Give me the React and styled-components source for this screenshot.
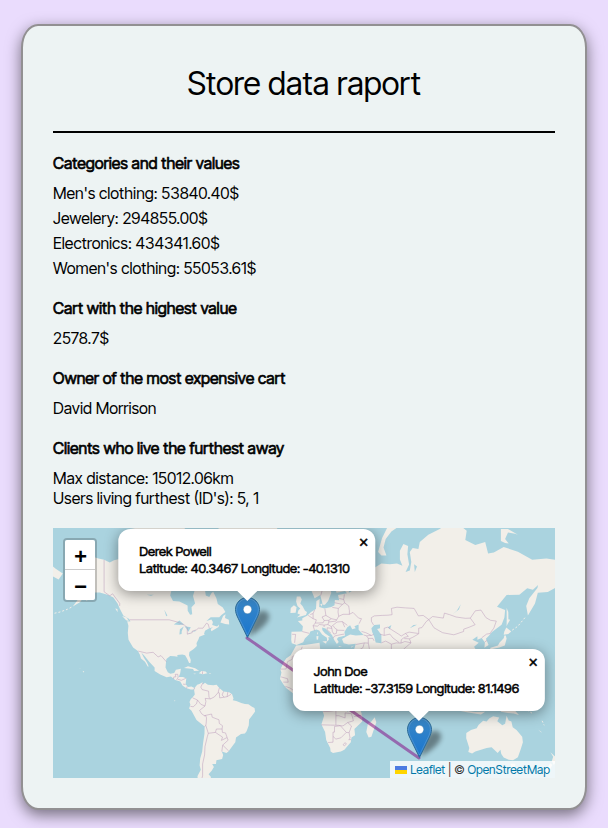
import React from "react";
import styled, { createGlobalStyle } from "styled-components";

const GlobalStyle = createGlobalStyle`
  *, *::before, *::after { box-sizing: border-box; }
  body {
    margin: 0;
    background: #eadcfd;
    color: #000;
    font-family: "Inter Tight", Inter, "Liberation Sans", sans-serif;
    font-size: 16px;
    font-weight: 400;
    line-height: 20px;
  }
  h1, h2, p, ul { margin: 0; padding: 0; }
`;

const Page = styled.main`
  padding: 24px 21px 18px;
`;

const Card = styled.article`
  padding: 30px;
  border: 2px solid #929092;
  border-radius: 3%;
  background: #edf3f3;
  box-shadow: 0 5px 15px rgba(0, 0, 0, 0.5);
`;

const Title = styled.h1`
  padding: 8px 0 27px;
  border-bottom: 2px solid #000;
  font-size: 32px;
  font-weight: 400;
  line-height: 40px;
  text-align: center;
`;

const Section = styled.section`
  margin-top: 20px;
`;

const Heading = styled.h2`
  margin-bottom: 10px;
  font-size: 16px;
  font-weight: 400;
  line-height: 20px;
  -webkit-text-stroke: 0.04em currentColor;
`;

const ValueList = styled.ul`
  display: flex;
  flex-direction: column;
  gap: 5px;
  list-style: none;
`;

const MapFrame = styled.section`
  position: relative;
  height: 250px;
  margin-top: 20px;
  overflow: hidden;
  background: #aad3df;
  font-size: 12px;
`;

const WorldSvg = styled.svg`
  display: block;
  width: 100%;
  height: 250px;
`;

const ZoomControl = styled.div`
  position: absolute;
  top: 10px;
  left: 10px;
  display: flex;
  flex-direction: column;
  border: 2px solid rgba(0, 0, 0, 0.2);
  border-radius: 4px;
  background-clip: padding-box;
`;

const ZoomButton = styled.button`
  width: 30px;
  height: 30px;
  padding: 8px 0 0;
  border: 0;
  border-bottom: ${(p) => (p.$divided ? "1px solid #ccc" : "0")};
  border-radius: ${(p) => (p.$divided ? "2px 2px 0 0" : "0 0 2px 2px")};
  background: #fff;
  color: #000;
  font: bold 22px/22px "Liberation Mono", monospace;
  text-indent: 1px;
`;

const Pin = styled.div`
  position: absolute;
  left: calc(50% + ${(p) => p.$x}px);
  top: ${(p) => p.$y}px;
  width: 0;
  height: 0;
`;

const MarkerSvg = styled.svg`
  position: absolute;
  left: -12px;
  bottom: 0;
  overflow: visible;
`;

const Popup = styled.div`
  position: absolute;
  bottom: 47px;
  left: 0;
  transform: translateX(-50%);
  padding: 14px 26px 14px 21px;
  border-radius: 12px;
  background: #fff;
  box-shadow: 0 3px 14px rgba(0, 0, 0, 0.4);
  font-size: 13px;
  line-height: 17px;
  white-space: nowrap;
  -webkit-text-stroke: 0.04em currentColor;
`;

const PopupTip = styled.svg`
  position: absolute;
  top: 100%;
  left: 50%;
  margin-left: -12px;
`;

const CloseButton = styled.button`
  position: absolute;
  top: 0;
  right: 0;
  width: 24px;
  height: 24px;
  padding: 0;
  border: 0;
  background: none;
  color: #000;
  font: 16px/24px "Inter Tight", Inter, sans-serif;
`;

const Attribution = styled.div`
  position: absolute;
  right: 0;
  bottom: 0;
  padding: 0 5px;
  background: rgba(255, 255, 255, 0.8);
  font-size: 12px;
  line-height: 17px;
  color: #333;
  white-space: nowrap;
`;

const MapLink = styled.a`
  color: #0078a8;
  text-decoration: none;
`;

const Flag = styled.svg`
  margin-right: 3px;
`;

/* Web Mercator at zoom 1: the world is 512 units wide. */
const CENTER_X = 251.6;
const EQUATOR_Y = 172;
const SCALE = 512 / (2 * Math.PI);
const project = (lng, lat) => [
  CENTER_X + (lng * 512) / 360,
  EQUATOR_Y - SCALE * Math.log(Math.tan(Math.PI / 4 + (lat * Math.PI) / 360)),
];
const toPath = (text, closed) => {
  const n = text.trim().split(/[\s,]+/).map(Number);
  let d = "";
  for (let i = 0; i < n.length; i += 2) {
    const [x, y] = project(n[i], n[i + 1]);
    d += `${i ? "L" : "M"}${x.toFixed(1)} ${y.toFixed(1)}`;
  }
  return closed ? d + "Z" : d;
};

const LAND = [
  // North and Central America
  `-168,65.7 -162,66.5 -166,68.3 -163,69.5 -157,71.3 -152,70.8 -145,70 -141,69.7 -137,69 -134,69.6 -129,70 -125,70 -120,69.6 -115,68.5 -108,68 -98,68 -94,72 -90,69 -85,69.6 -82,68 -87,65 -93,62 -94.5,59 -92.5,57 -88,56.7 -82.3,55.2 -82.2,53 -80.5,51.3 -79,51.5 -79.5,54.5 -77,56 -78.5,58.8 -77.5,60.5 -78,62.4 -73,62.2 -70,60.9 -69.5,59 -67,58.4 -65.5,59.8 -64.3,60.3 -62,58 -61,55.8 -57.5,54.4 -55.7,52.5 -58.5,51.2 -60,50.2 -66,50.2 -69,48.5 -65.5,49.2 -64.5,48 -65,46.5 -61.5,45.8 -60.2,46.8 -60.5,45.6 -65.5,43.5 -66,44.6 -64.5,45.5 -67,45 -70,43.7 -70.7,42 -70,41.7 -74,40.6 -74.5,39.3 -76,37 -75.7,35.4 -78,33.8 -81,32 -81.3,30 -80,27 -80.3,25.2 -81.2,25.2 -82.7,28 -84,30 -86,30.4 -89.5,30.2 -89.4,29.1 -91.5,29.4 -94.5,29.5 -97.2,27.7 -97.5,25 -97.8,22.3 -96.2,19.2 -94.4,18.2 -91.7,18.6 -90.5,20.8 -87,21.5 -87.5,18.5 -88.5,15.9 -85.5,15.9 -83.2,15 -83.7,11 -82,9 -79.6,9.5 -77.5,8.5 -78,7.3 -80,7.3 -83,8.2 -85.7,10 -87.5,12.8 -91,13.9 -94,16.2 -97,15.8 -101.5,17.7 -105.5,20 -105.5,22.3 -109.3,26 -112.5,29.5 -114.8,31.7 -113,28.5 -110.8,25.5 -109.6,23 -110.3,23 -112.2,26 -115,28 -115.8,30.3 -117.2,32.6 -120.6,34.6 -123.8,39 -124.3,42.5 -123.9,46.2 -124.7,48.3 -122.5,48.2 -123.3,49.4 -127.5,51 -130,54 -131.5,56 -134.5,58.3 -138,59.2 -144,60.1 -148,60.1 -152,59.2 -151,61.1 -154,59.2 -158,56.5 -163,54.8 -158,58.5 -162,58.8 -162,60 -165.5,61.6 -161,64 -166,64.5`,
  // Canadian Arctic and Greenland
  `-124,72 -117,70 -105,69.5 -103,73 -118,74 -123,76 -90,77.5 -80,75 -80,73.7 -66,68 -62,66.5 -65,63 -72,64 -76,68 -90,72`,
  `-73,78.2 -60,76 -55,72 -53,67 -48,61 -43.5,60 -40,65 -25,69.5 -20,75 -18,78`,
  // Newfoundland, Vancouver, Arctic fringes
  `-59.2,47.7 -57.3,50.8 -55.6,51.5 -56,49.9 -53.3,49 -53,46.8 -55.8,47`,
  `-128.3,50.7 -125,50 -123.6,48.4 -125.5,48.8`,
  `-133.2,54 -131.6,53.8 -131.4,52.4`,
  `-154.5,57.8 -152.3,58.3 -153,57`,
  // Caribbean
  `-84.8,22 -82,23.1 -77,21.8 -74.2,20.2 -77.7,19.9 -78.5,21.3`,
  `-74.4,18.5 -72.5,19.9 -69.6,19.7 -68.4,18.5 -71.5,17.8`,
  `-78.3,18.4 -76.3,18.2 -77.2,17.8`, `-67.2,18.4 -65.7,18.4 -66,18 -67.1,18`,
  `-156,20.2 -154.9,19.5 -155.7,19`, `-158.2,21.6 -157.4,21.3 -158,21.2`,
  `-91.5,0 -90.9,-.3 -91.4,-1`,
  // South America
  `-77.5,8.5 -75.5,10.7 -74,11.2 -71.7,12.4 -71.5,10.9 -70,12.1 -68,10.6 -64.3,10.3 -61.9,10.7 -60,8.5 -57,6 -53,5.4 -51,4 -50,1 -50.5,-.2 -48,-.8 -44.5,-2.2 -42,-2.8 -39.5,-3 -37,-4.8 -35.2,-5.7 -34.8,-8 -37,-11 -39,-13.5 -39.2,-17.5 -40.8,-21.5 -42,-23 -44.7,-23.2 -48.2,-25.5 -48.7,-28.5 -51,-31 -53.5,-34 -55,-34.9 -58.2,-34 -57.2,-36 -58,-38.2 -62,-39 -62.3,-41 -65,-41 -63.8,-42.5 -65.3,-44.5 -67.5,-46.2 -65.8,-47.5 -67,-50 -75,-50 -75.3,-47 -73,-44 -73.8,-41.8 -73.4,-38 -72,-34 -71.4,-29 -70.4,-23 -70.3,-18.4 -76,-14 -79.5,-7.5 -81.2,-6 -80.3,-3.3 -80.9,-1.5 -80,.7 -78.8,1.7 -77.2,3.8 -77.7,7`,
  // Eurasia, with the Arabian and Indian peninsulas
  `-9.2,43.2 -1.7,43.4 -1.2,46 -4.7,48.4 -1.6,48.7 -1.6,49.7 2,51 4.5,52.5 8,53.8 8.3,57 10.6,57.7 10.3,54.6 14,54 18.8,54.6 21,55.3 21.3,57.3 24.3,57.2 23.5,59.2 29.8,59.8 28.5,60.6 22.5,60 21.3,61.8 25.3,65 22,65.8 17.3,62 18.8,60 16.5,57 14.3,55.5 12.8,55.5 11,59.2 7,58 5,60.5 5.5,62.3 12,65.5 15,68.3 21,70.2 28,71 33,69.3 41,67.5 40,66.2 34,66.5 37,63.9 40,64.8 42.5,66.4 44,66.1 44,68.4 46,66.9 54,68.8 60,68.6 65,68.8 68.8,68.2 67,69.8 67,71.8 69.5,73.2 72.8,72.8 72.3,71 73.5,68.5 71,66.5 74,66.9 75,69.2 74,71.5 76,72.4 80,72.2 81,73.6 87,75 95,76 104,77.6 114,75.7 113,74 120,73 127,73.6 129,71.2 133,71.4 140,72.6 150,71.6 160,69.7 170,70 177,69.7 190,66 184,64.5 178,64.6 179.5,62.5 171,60.2 164,60 163,58 162,56 157,51 155.8,55 158,58 163.7,61.6 164.2,62.6 160.5,61 156.5,61.5 151,59.3 142,59.2 135.3,54.7 141,53.3 140.5,50 138.5,46.7 131.8,43 129.7,41.2 127.5,39.5 129.4,36 126.4,34.4 126.8,37.4 124.5,39.9 121.5,39 121.5,40.8 118,39 122.4,37.3 119.2,35 122,31 121,28 115,22.7 108,21.5 106,18.8 109,12 105,9 100.7,13.4 103,3 98,9 98,15 94,16 90,22 80,15 77,8 73,19 67,25 57,27 51,28 48,30 51,25 56,26 59,22.5 52,16 43.5,13 39,21 35,28 34,31.2 36,36.7 31,36.3 27.5,37 26.3,39.4 29,40.6 32,41.8 36,41.3 41.4,41.5 38,44.2 38,46.8 35,46 36,45 33.5,44.5 32,46.4 30,45.5 28,43 28.5,41.2 26,40.7 23.7,40.3 22.7,39.3 24,37.8 22.7,36.6 21,38.5 19.3,41.5 14.7,44.8 12.3,45.4 12.5,44 14.3,42.4 18.4,40.2 16.7,40.4 17,39 15.8,38 15.7,40 12.3,41.8 10.3,43.8 8.3,44.3 4,43.4 3.2,41.9 .2,39.6 -1,37.6 -5.6,36 -9,37 -9.4,38.8`,
  `-180,68.9 -175,67.4 -170,66.1 -173,64.3 -178,65.5 -180,65`,
  // European islands
  `-5.5,58.6 -3,58.6 -2,57.5 -3,56 -1.5,55 .3,53 1.7,52.5 1,51.2 -5.5,50.1 -3,51.3 -5,51.8 -4.3,53.2 -3,54 -5,55 -6,56.8`,
  `-10,52 -9.7,54.2 -7.5,55.3 -5.6,54.5 -6.3,52.2`,
  `12.5,38 15.6,38.2 15.1,36.7`, `8.3,40.9 9.7,41 9.5,39.1 8.5,39`, `8.7,42.5 9.5,43 9.3,41.5`,
  `23.6,35.5 26.3,35.2 24.5,34.9`, `32.4,34.9 34.5,35.6 33,34.6`, `12,54.8 12.6,56 11,55.7`,
  // Arctic islands
  `51.7,71.5 54,70.7 57.5,70.7 55.5,72.5 57,74.2 61,75.6 68.5,76.8 67,77.1 58,76.2 54.5,74.4`,
  `138,73.8 141,73.4 143.5,73.3 141,74.2 143,75.4 148,75.2 150,75 143,76 138,76`,
  `178.8,71.3 181,71.5 181,70.9`,
  // Sakhalin, Japan
  `142,54.2 143.2,52.5 143.3,49.3 144.5,49 142.7,47 142,46 142.1,49`,
  `140,41.6 140.4,43.3 141.8,45.4 145.3,43.4 143.2,42`,
  `140,39.8 140.5,41.2 141.5,41.3 142,39.5 140.8,35.7 137,34.6 132,33.7 130,32 130.7,34.5 136,35.8 137,37.3`,
  // Africa
  `-6,35.8 0,36 10.5,37.3 11,33.8 15,32.3 19,30.3 21.5,32.8 25,31.6 32,31.3 33,28 37,21 43,12 51,11.5 46,3 41,-2 39,-6 40.5,-11 40.5,-15 35,-20 35.5,-24 33,-25.5 32.5,-28.5 28,-33 25.5,-34 20,-34.8 18.3,-34 18,-32 15.2,-27 14.4,-22 11.8,-17 13.7,-11 12,-5.5 9,-1 9.5,3.8 6,4.3 4,6.4 -2,4.8 -8,4.5 -13,8.5 -15,11 -17.3,14.7 -16.3,19 -17,21 -14.8,25.5 -13,28 -9.8,30`,
  `49.3,-12 50.4,-15.5 47,-25 45,-25.5 43.4,-22 44.5,-16.5 47,-15`,
  // Indonesia, New Guinea
  `105,-6.8 108,-6.7 114.5,-7.7 120,-8.4 127,-8.3 124,-10.2 115,-8.7`,
  `131,-1 138,-2 145,-4.5 148,-7.5 150.7,-10.5 147,-9.5 143,-9.2 138,-8.3 137.5,-5`,
  // Australia, New Zealand
  `113.7,-22.5 117,-20.6 121,-19.5 122.3,-17.3 125.5,-14.4 128,-15 130,-12.7 132.6,-11.4 136.8,-12.2 135.5,-14.8 139,-17.5 141,-16.5 142,-11 143.5,-14.2 145.4,-15 146.3,-18.8 149,-20.7 153,-25 153.5,-28.5 152,-32.5 150,-37.3 146.5,-39 143.5,-38.7 140,-37.5 138.3,-35.5 137.7,-33 135.8,-34.8 131.5,-31.5 128,-32 124,-33 120,-34 117.8,-35.1 115.1,-34.3 115.8,-32 113.6,-26`,
  `144.8,-40.8 148.2,-40.8 147.7,-43 146,-43.5`,
  `172.8,-34.5 175.5,-36.5 178.4,-37.7 177,-39.5 175.2,-41.5 173.8,-39.3 174.8,-37`,
  `172.7,-40.6 174.2,-41.4 171,-45.8 168.5,-46.6 166.5,-46 170.8,-42.8`,
  `164.2,-20.3 167,-22.3 166,-22`, `177.5,-18 178.5,-17.5 178.2,-18.2`,
].map((p) => toPath(p, true));

const WATER = [
  // Great Lakes
  `-92,46.8 -88,48.7 -84.7,46.8 -88,46.5`, `-88,41.8 -87.7,44.5 -85,45.9 -86.4,43.5 -86.5,42`,
  `-84.5,46 -80,45.5 -81.7,43.2 -83.3,45`, `-83.2,41.8 -79,42.8 -81,42.2`, `-79.7,43.4 -76.3,44 -77,43.4`,
  `-98.7,53.5 -96.5,51 -97.3,50.6`, `-116,61.2 -110,62.5 -112,61.3`, `-111,59.3 -106,59.3 -108,58.9`,
  // Inland seas of Eurasia
  `47,45 49,46.5 53,46.8 53,45 51,44.6 54,41.5 54,37 50,37.4 49,40.5 47.5,43`,
  `58.5,45.5 61,46.5 60,44.5`, `74,45 79,46.7 76.5,46.6`, `104,51.5 108.5,53.5 109.8,55.7 107,53`,
  `31,60 33,60.5 31.5,61.4`, `34.5,61 36,61 35,62.7`, `77.5,66.5 79,68 77,68.6`, `28.7,40.5 27,40.3 28,41`,
  // African lakes, Titicaca, Plata
  `31.8,-1 34,-1 33,-2.7`, `29.2,-4 30.8,-8.6 30.3,-8.4`, `34,-9.8 35,-14 34.4,-12`, `-70,-15.5 -69,-16.3 -69.5,-16`,
].map((p) => toPath(p, true)).join("");

const BORDERS = [
  `-141,69.7 -141,60.3 -137,58.9 -135,59.6 -130,56 -130,55`,
  `-123,49 -95.2,49 -89.5,48 -84.5,46.5 -82.5,45.3 -82.5,42 -79,42.7 -79,43.5 -76,44.2 -74.7,45 -71.5,45 -69,47.4 -67.8,47 -67,45`,
  `-117,32.5 -111,31.3 -106.5,31.8 -103,29 -101,29.8 -97.2,25.9`, `-92.2,14.6 -92,16 -90.5,16.1 -91,17.8 -89.2,17.8 -88.9,15.9 -90,13.9`,
  `-89,14.4 -86.7,13.7 -83.5,15`, `-85.5,11.1 -83.7,10.9`, `-83,8.2 -82.6,9.5`, `-77.9,7.3 -77.3,8.6`, `-71.8,18 -71.8,19.7`,
  `-71.5,12 -73,9 -72,7.3 -67.5,6.2 -67.2,2 -66.2,.8 -69.9,1.1 -69.4,-1 -70,-4.2 -73,-3 -75.3,0 -78.7,1.5`,
  `-75.3,0 -76,-2.7 -78.3,-4.8 -80.3,-4.4`, `-70,-4.2 -73.8,-7.3 -72.5,-9.5 -70.5,-11 -69.5,-11 -69,-12.5 -69.2,-16 -69.5,-17.6 -70.4,-18.4`,
  `-70.5,-11 -65.4,-9.8 -65,-12 -60.2,-13.8 -60,-16.3 -57.7,-17.8 -58,-20 -62,-20 -62.7,-22.2 -67.7,-22.8 -69.5,-17.6`,
  `-58,-20 -57.8,-22.2 -55.6,-22.5 -54.5,-25.5 -58.5,-27.3 -57.7,-25.2 -62.7,-22.2`, `-54.5,-25.5 -53.8,-27.2 -57.6,-30.2 -58.2,-34`, `-57.6,-30.2 -53.4,-33.7`,
  `-67.7,-22.8 -68.4,-25 -70,-31 -70.3,-36 -71.7,-41 -71.7,-47 -73,-50`,
  `-66.2,.8 -63.4,2.2 -60.8,5.2 -60,5 -59.7,1.5 -56.5,2 -54.5,2.3 -51.7,4`, `-60.8,5.2 -60,8.4`, `-57,6 -58,3.5 -56.5,2`, `-54,5.6 -54.5,2.3`,
  // Europe
  `-8.8,41.9 -6.3,41.8 -7,37.3`, `-1.7,43.3 3.2,42.4`, `2.5,51 6,49.5 8.2,49 7.5,47.5 6,46.2 7,43.8`, `4,51.4 6,51.8 6,49.5`, `6,51.8 7,53.3`, `7.5,47.5 9.7,47.5 13,47.6 13.8,48.7 12.2,50.3 15,51 14.3,53.8`,
  `6,46.2 9,46 10.4,46.8 13.7,46.5 13.7,45.6`, `13.8,48.7 17,48.8 18.8,49.5 15,51`, `17,48.8 17,48 22,48.4 22.6,49 18.8,49.5`, `13.7,46.5 16.4,46.8 17,48`, `16.4,46.8 18.8,45.8 22.8,48`, `18.8,45.8 19.2,44.9 15.9,45.2 15.8,44.2 18.5,42.5`, `19.2,44.9 19.5,43.4 20.5,42 22.3,42.3 22.7,44.4 21.4,44.9 20.2,46.1`,
  `22.7,44 28,43.9`, `22.8,48 26.6,48.2 28.2,45.5`, `26.6,48.2 30,46.4`, `22.6,49 24,50.6 23.5,52.5 23.8,54 19.5,54.4`, `24,50.6 27,51.5 31.5,51.5 34,52.3 38,49.8 40,49.5 38.3,47.2`, `23.8,54 26.6,55.6 28.2,56.2 31,55 31.5,53 31.5,51.5`,
  `21,56.3 26.6,55.6`, `24.4,57.9 27.5,57.5 28.2,56.2`, `27.5,57.5 28,59.4`, `11.3,59 12.5,61 12.3,64 15,66 18,68.5 21,69 25.7,69.8 29,69`, `24,65.8 23.7,67.8 21,69`, `29,69.7 30,67.5 29.8,64 31.5,62.8 28,60.6`,
  `20,39.7 21,41 23,41.3 26.3,41.8 28,42`, `41.5,41.5 43.5,41.1 47,41.3 48.5,41.8`, `40,43.4 43,42.7 47,41.3`, `43.5,41.1 44.8,39.7 48,39.7 48.8,38.4`,
  // Asia
  `36,36.3 42,37.2 44.8,37.1 44.8,39.7`, `42,37.2 41,34.5 38.8,33.4 36,32.5`, `38.8,33.4 45,29.2 47.7,30`, `44.8,37.1 45.5,34 48,30`, `54,37.3 57,38.2 61,36.5 61,33.5`, `61,36.5 64.5,37.2 67.8,37.1 70.5,38 74.8,37.3 71.5,35 69.5,33.5`, `53,42 56,41.3 56,45 58.5,45.5 61,44.3 66,42 68,41 70.9,42.3 73.5,43 80,42.3`,
  `56,41.3 60,42 62,40 66.5,37.4`, `67.8,37.1 68,39 70,40.2 73,40.8 70.9,42.3`, `70,39.6 73.7,39.5 74.8,37.3`, `73.7,39.5 76,40.3 80.2,42.1 80.2,45 82.5,45.3 85.5,48.2 87.3,49.1`,
  `48.5,46.5 47,48.3 47,50 49,50.8 54.5,51 58.5,51.1 61.5,51.3 61,54 65,54.5 71,54.2 77,54 80,50.8 83.4,51 87.3,49.1`, `87.3,49.1 90,50.5 97.5,49.8 98.3,52 102,51.3 106.5,50.3 113,49.7 116.5,49.8 119.9,46.7 115.7,45.5 111.9,44.5 111.8,43.3 105,41.6 97,42.7 91,45.2 87.3,49.1`,
  `116.5,49.8 120,53 124,53.3 127.5,50 130.8,48.8 134.8,48.4 133,45 131,43 130.6,42.3 128,42 124.5,40`, `126.7,37.8 128.4,38.6`,
  // Africa
  `11.7,-17.2 18.4,-17.4 24,-17.5 25.2,-17.8`, `20,-28.4 20,-22 21,-22 21,-18.3 25.2,-17.8 29.3,-22.2 25.5,-25.7 22,-26.5 20,-24.8`, `16.5,-28.6 20,-28.4`, `29.3,-22.2 31.3,-22.4 33,-18 30.3,-15.6 27,-17.9 25.2,-17.8`, `31.3,-22.4 32,-26 31,-26.8 32.8,-26.9`, `27,-30 28.5,-28.7 29.4,-29.6 28,-30.6 27,-30`, `22,-17.3 22,-11 24,-11 28.5,-12.5 28.5,-9 33,-9.6 34.3,-14.5 30.3,-15.6`, `13,-8 17,-8 22,-7.3 22,-11`, `34.8,-11.5 40.4,-10.5`, `-17,21.2 -13,21.3 -12,26 -8.7,27.5 -8.7,29 -3,32 -1.7,35`, `-16.5,16 -12,14.8 -11.5,12.4 -15,12.5`, `-13.5,9.5 -10.5,8.5 -8,7 -7.5,4.5`,
].map((p) => toPath(p, false)).join("");

const ISLETS = [
  `-164,54.5 -167,53.6 -172,52.5 -177,51.8`, `146,44 150,46 155,50`,
  `154,-5.5 157,-7.5 161,-9.8`, `167,-14.5 168.5,-17.5`,
].map((p) => toPath(p, false)).join("");

const CATEGORIES = [
  ["Men's clothing", "53840.40"],
  ["Jewelery", "294855.00"],
  ["Electronics", "434341.60"],
  ["Women's clothing", "55053.61"],
];

const CLIENTS = [
  { name: "Derek Powell", lat: "40.3467", lng: "-40.1310", x: -57, y: 110 },
  { name: "John Doe", lat: "-37.3159", lng: "81.1496", x: 115, y: 230 },
];

function World() {
  return (
    <WorldSvg viewBox="0 0 502 250" preserveAspectRatio="xMidYMid slice" role="img" aria-label="World map">
      {LAND.map((d) => <path key={d} d={d} fill="#f2efe9" />)}
      <path d={WATER} fill="#aad3df" />
      <path d={BORDERS} fill="none" stroke="#b795b7" strokeOpacity="0.6" strokeWidth="0.8" strokeLinejoin="round" />
      <path d={ISLETS} fill="none" stroke="#f2efe9" strokeWidth="1" strokeDasharray="2 2" />
      <path d="M194 110 366 230" stroke="#800080" strokeOpacity="0.5" strokeWidth="3" strokeLinecap="round" />
    </WorldSvg>
  );
}

function Marker({ client, id }) {
  return (
    <Pin $x={client.x} $y={client.y}>
      <MarkerSvg width="41" height="41" viewBox="0 0 41 41" aria-hidden="true">
        <defs>
          <linearGradient id={`fill-${id}`} x1="0" y1="0" x2="0" y2="1">
            <stop offset="0" stopColor="#3a87c6" />
            <stop offset="1" stopColor="#1976cf" />
          </linearGradient>
          <filter id={`soft-${id}`} x="-40%" y="-40%" width="180%" height="180%">
            <feGaussianBlur stdDeviation="2.5" />
          </filter>
        </defs>
        <path d="M13 40C15 33 17 20 24 15C29 12 35 15 34 21C32 28 22 35 13 40Z" fill="#000" opacity="0.4" filter={`url(#soft-${id})`} />
        <path d="M12.5 .5C5.9.5.5 5.9.5 12.5C.5 15 1.4 18 3.2 21.4L12.5 40.4L21.8 21.4C23.6 18 24.5 15 24.5 12.5C24.5 5.9 19.1.5 12.5.5Z" fill={`url(#fill-${id})`} stroke="#2e6c97" />
        <path d="M12.5 1.6C6.5 1.6 1.6 6.5 1.6 12.5C1.6 15 2.5 17.7 4.2 21L12.5 38L20.8 21C22.5 17.7 23.4 15 23.4 12.5C23.4 6.5 18.5 1.6 12.5 1.6Z" fill="none" stroke="#fff" strokeOpacity="0.15" />
        <circle cx="12.5" cy="12.5" r="4.2" fill="#fff" stroke="#2e6c97" strokeOpacity="0.5" strokeWidth="0.7" />
      </MarkerSvg>
    </Pin>
  );
}

function ClientPopup({ client }) {
  return (
    <Pin $x={client.x} $y={client.y}>
      <Popup>
        {client.name}
        <br />
        Latitude: {client.lat} Longitude: {client.lng}
        <PopupTip width="24" height="10" viewBox="0 0 24 10" aria-hidden="true">
          <path d="M2 0H22L12 10Z" fill="#fff" />
        </PopupTip>
        <CloseButton type="button" aria-label={`Close ${client.name}`}>×</CloseButton>
      </Popup>
    </Pin>
  );
}

export default function App() {
  return (
    <Page>
      <GlobalStyle />
      <Card>
        <Title>Store data raport</Title>
        <Section>
          <Heading>Categories and their values</Heading>
          <ValueList>
            {CATEGORIES.map(([name, value]) => (
              <li key={name}>{`${name}: ${value}$`}</li>
            ))}
          </ValueList>
        </Section>
        <Section>
          <Heading>Cart with the highest value</Heading>
          <p>2578.7$</p>
        </Section>
        <Section>
          <Heading>Owner of the most expensive cart</Heading>
          <p>David Morrison</p>
        </Section>
        <Section>
          <Heading>Clients who live the furthest away</Heading>
          <p>Max distance: 15012.06km</p>
          <p>Users living furthest (ID's): 5, 1</p>
        </Section>
        <MapFrame aria-label="Client locations">
          <World />
          {CLIENTS.map((c, i) => <Marker key={c.name} client={c} id={i} />)}
          {CLIENTS.map((c) => <ClientPopup key={c.name} client={c} />)}
          <ZoomControl>
            <ZoomButton type="button" aria-label="Zoom in" $divided>+</ZoomButton>
            <ZoomButton type="button" aria-label="Zoom out">−</ZoomButton>
          </ZoomControl>
          <Attribution>
            <MapLink href="#leaflet">
              <Flag width="12" height="8" viewBox="0 0 12 8" aria-hidden="true">
                <path fill="#4c7be1" d="M0 0h12v4H0z" />
                <path fill="#ffd500" d="M0 4h12v4H0z" />
              </Flag>
              Leaflet
            </MapLink>
            {" | © "}
            <MapLink href="#openstreetmap">OpenStreetMap</MapLink>
          </Attribution>
        </MapFrame>
      </Card>
    </Page>
  );
}
